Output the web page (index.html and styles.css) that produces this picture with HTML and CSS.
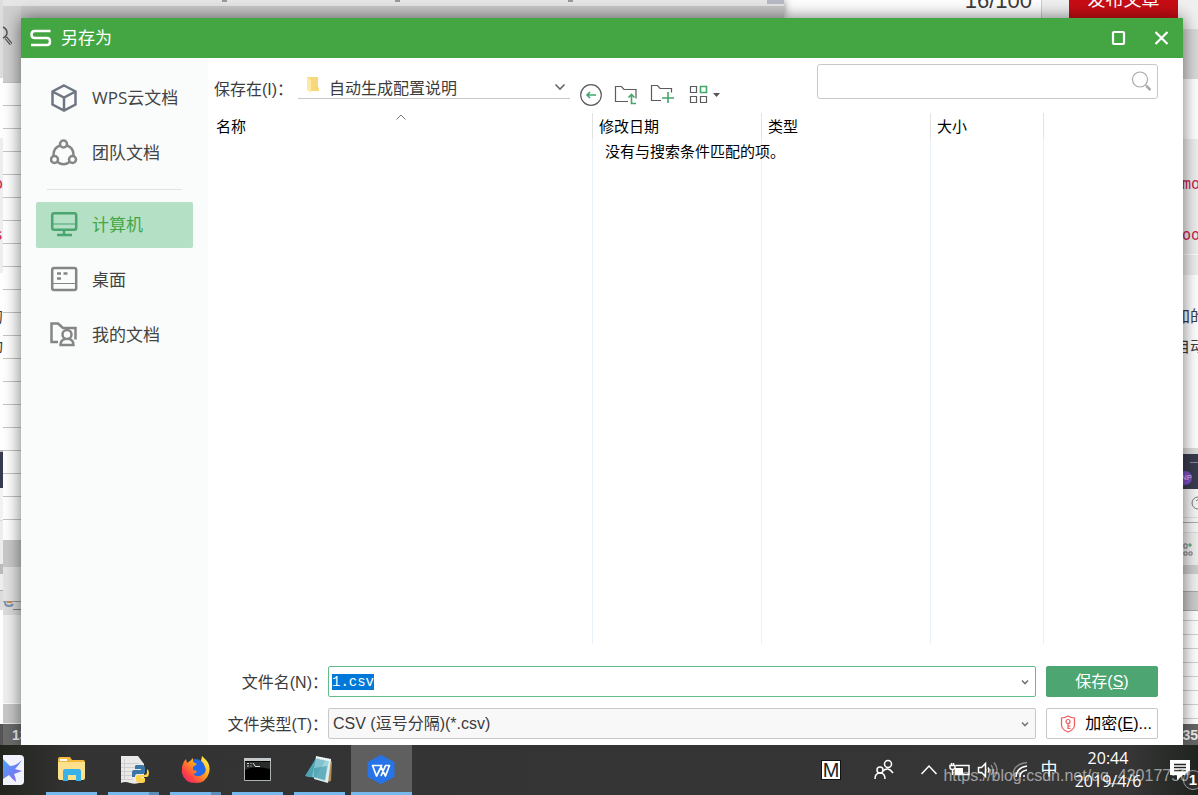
FILE: index.html
```html
<!DOCTYPE html>
<html lang="zh-CN">
<head>
<meta charset="utf-8">
<title>另存为</title>
<link rel="stylesheet" href="styles.css">
</head>
<body>
<main class="desktop">
  <div class="backdrop" aria-hidden="true">
    <div class="back-top">
      <div class="sheet-top"><i></i><i></i><i></i></div>
      <div class="title-count">16/100</div>
      <div class="publish">发布文章</div>
    </div>
    <div class="edge edge-page"></div>
    <div class="edge edge-sheet"></div>
    <div class="edge edge-right"></div>
    <svg class="back-lens" viewBox="0 0 12 22"><path d="M3 2q4 2 4 6 0 3-4 5M6 12l5 7"/><path d="M6 13l5 6" stroke-width="3.500"/><path d="M6 13l5 6" stroke="#ddd" stroke-width="1"/></svg>
    <span class="scrap left code s1">o</span>
    <span class="scrap left code s2">s</span>
    <span class="scrap left s3">的</span>
    <span class="scrap left s4">动</span>
    <span class="scrap sheet-num">13</span>
    <span class="scrap right code s1">mo</span>
    <span class="scrap right code s2">oo</span>
    <span class="scrap right s3">加的</span>
    <span class="scrap right s4">自动</span>
    <span class="scrap avatar">NP</span>
    <svg class="back-mark" viewBox="0 0 18 12"><path stroke="#7a90b0" d="M2 1q0 4 4 4 3 0 4-2"/><path stroke="#d08a50" d="M4 1h5"/><path stroke="#888" stroke-width="1" d="M10 8.500h8"/></svg>
    <svg class="back-tools" viewBox="0 0 15 110"><path stroke="#8a8d9a" d="M7 12.500h8"/><circle cx="15" cy="53" r="6"/><path d="M13 51q2-3 4 0l-2 3"/><path d="M1 94h3v4H1zM6 102h3v3H6zM1 102h3v3H1z"/><path class="plus" d="M5 95h4M7 93v4"/></svg>
    <span class="scrap right-num">35</span>
  </div>

  <section class="dialog" role="dialog" aria-labelledby="dialog-title">
    <header class="titlebar">
      <svg class="logo" viewBox="0 0 22 18"><path d="M20.500 2H5Q1.500 2 1.500 5.500T5 9H17Q20 9 20 12.500T17 16H1"/></svg>
      <h1 id="dialog-title">另存为</h1>
      <button class="win-btn" aria-label="最大化"><svg viewBox="0 0 16 16"><rect x="3" y="2" width="11" height="12" rx="1"/></svg></button>
      <button class="win-btn" aria-label="关闭"><svg viewBox="0 0 16 16"><path d="M2.500 2l12 12M14.500 2l-12 12"/></svg></button>
    </header>

    <div class="body">
      <nav class="sidebar">
        <a class="place" href="#cloud"><svg viewBox="0 0 28 28"><g stroke="#6e7682"><path d="M14 1.500l11.500 6v13L14 26.500 2.500 20.500v-13zM2.500 7.500L14 13.500l11.500-6M14 13.500v13"/></g></svg>WPS云文档</a>
        <a class="place" href="#team"><svg viewBox="0 0 28 28"><circle cx="13.500" cy="5" r="3.500"/><circle cx="4.500" cy="20.500" r="3.500"/><circle cx="22.500" cy="20.500" r="3.500"/><path d="M10 6.500Q3 9 3.500 17M17 6.500Q24 9 23.500 17M7.500 23q6 4.500 12 0"/></svg>团队文档</a>
        <hr>
        <a class="place active" href="#computer" aria-current="true"><svg viewBox="0 0 28 28"><rect x="2.200" y="2.200" width="24" height="16.500" rx="2"/><path d="M14 19v5M7 24h15"/><path class="thin" d="M2 13h24"/></svg>计算机</a>
        <a class="place" href="#desk"><svg viewBox="0 0 28 28"><rect x="2.200" y="2" width="24" height="22" rx="2"/><path class="thin" d="M2 17.500h24"/><path d="M7 7.500h4M13.500 7.500h4M7 12.500h4"/></svg>桌面</a>
        <a class="place" href="#docs"><svg viewBox="0 0 28 28"><path d="M8 21H1.500V2.500H8l5 4.500h12.500v11.500"/><circle cx="17" cy="13.500" r="4.500"/><path d="M15 18q-4.500 1-4.500 6h13q0-5-4.500-6"/></svg>我的文档</a>
      </nav>

      <div class="pane">
        <div class="toolbar">
          <label for="folder">保存在(I)：</label>
          <div class="folder-box">
            <svg class="folder-icon" viewBox="0 0 14 18"><path fill="#f9d87c" d="M1 1h11v10l1 1v3H5V5L1 2z"/><path fill="#fdeaa9" d="M1 1l4 3v13l-4-3z"/></svg>
            <select id="folder"><option>自动生成配置说明</option></select>
            <svg class="chev" viewBox="0 0 12 8"><path d="M1.500 1.500L6 6l4.500-4.500"/></svg>
          </div>
          <div class="tools">
            <button aria-label="后退"><svg viewBox="0 0 24 24"><circle cx="12" cy="12" r="10.300"/><path class="g" d="M8 12h9M11 9l-3 3 3 3"/></svg></button>
            <button aria-label="上一级"><svg viewBox="0 0 24 24"><path d="M14 18.500H1.500v-15h6l2.500 3h12v9"/><path class="g" d="M22 20.500h-4.500v-9M14.500 14.500l3-3 3 3"/></svg></button>
            <button aria-label="新建文件夹"><svg viewBox="0 0 24 24"><path d="M12 17.500H2.500v-15h6l2.500 3h11.500v4"/><path class="g" d="M13 15h12M19 9v11"/></svg></button>
            <button class="views" aria-label="视图"><svg viewBox="0 0 34 24"><path d="M3.500 3.500h6v6h-6zM3.500 13.500h6v6h-6zM13.500 13.500h6v6h-6z"/><path class="g" d="M13.500 3.500h6v6h-6z"/><path class="f" d="M26 10h7l-3.500 4z"/></svg></button>
          </div>
          <div class="search">
            <input type="search" aria-label="搜索">
            <svg viewBox="0 0 20 20"><circle cx="9" cy="8.500" r="7.500"/><path d="M14.500 14l1.500 1.500"/><path stroke-width="2.600" d="M15.500 15l4 4"/></svg>
          </div>
        </div>

        <table class="files">
          <colgroup><col><col class="c-date"><col class="c-date"><col class="c-size"><col class="c-rest"></colgroup>
          <thead><tr><th>名称<svg class="sort" viewBox="0 0 12 6"><path d="M1.500 5.500L6 1l4.500 4.500"/></svg></th><th>修改日期</th><th>类型</th><th>大小</th><th></th></tr></thead>
          <tbody><tr><td></td><td class="empty">没有与搜索条件匹配的项。</td><td></td><td></td><td></td></tr></tbody>
        </table>

        <form class="form">
          <label for="fname">文件名(N)：</label>
          <div class="combo focus"><input id="fname" type="text" value="1.csv" autofocus><svg class="mini" viewBox="0 0 8 6"><path d="M1 1.500l3 3 3-3"/></svg></div>
          <button class="btn primary" type="button"><span>保存(<u>S</u>)</span></button>
          <label for="ftype">文件类型(T)：</label>
          <div class="combo"><select id="ftype"><option>CSV (逗号分隔)(*.csv)</option></select><svg class="mini" viewBox="0 0 8 6"><path d="M1 1.500l3 3 3-3"/></svg></div>
          <button class="btn encrypt" type="button"><svg viewBox="0 0 16 18"><path d="M8 1q3 2 6.500 2v7q0 4.500-6.500 7Q1.500 14.500 1.500 10V3Q5 3 8 1z"/><circle cx="8" cy="6.500" r="2"/><path d="M8 8.500V14M8 11h2.500M8 13.500h2.500"/></svg><span>加密(<u>E</u>)...</span></button>
        </form>
      </div>
    </div>
  </section>
</main>

<footer class="taskbar">
  <div class="cut-app"><svg viewBox="0 0 21 30"><defs><linearGradient id="bird" x1="0" y1="0" x2="1" y2="1"><stop offset="0" stop-color="#4aa6f8"/><stop offset=".6" stop-color="#727cf4"/><stop offset="1" stop-color="#b06ae8"/></linearGradient></defs><path fill="#f1f3fc" d="M0 0h17q4 0 4 4v22q0 4-4 4H0z"/><path fill="url(#bird)" d="M0 4l7 7q6 0 12-6-3 5-7 9l7 2-8 3q2 4 2 8-4-3-7-7l-6 4z"/></svg></div>
  <button class="task" aria-label="文件资源管理器"><svg viewBox="0 0 30 30"><path fill="#f5b93c" d="M1 4q0-2 2-2h10l2 3h11q2 0 2 2v16H1z"/><path fill="#fde08c" d="M1 7h27v16q0 2-2 2H3q-2 0-2-2z"/><path fill="#fff" d="M3 4h7v2H3z"/><path fill="#38b2e8" d="M6 26V16q0-2 2-2h14q2 0 2 2v10h-5v-6h-8v6z"/></svg></button>
  <button class="task group" aria-label="Python"><svg viewBox="0 0 30 30"><path fill="#e9e9e7" d="M2 1h17l6 8v17q-7 4-14 2-5-2-9 0z"/><path stroke="#cfcfcd" fill="none" d="M5.500 4v21M2 8.500h18M2 12.500h17M2 16.500h13M2 20.500h12M2 24.500h12"/><path fill="#3a76a8" d="M17 10h6q3 0 3 3v4q0 2-2 2h-6q-2 0-2 3h-3v-5q0-2 2-2h7v-1h-6v-3z"/><path fill="#ffd34b" d="M28 14q2 1 2 4t-2 4h-6v1h4v3q0 2-4 2-5 0-5-3v-3q0-2 2-2h6q3 0 3-3z"/></svg></button>
  <button class="task group" aria-label="Firefox"><svg viewBox="0 0 30 30"><defs><linearGradient id="fox" x1="1" y1="0" x2="0" y2="1"><stop offset=".1" stop-color="#fff34a"/><stop offset=".45" stop-color="#ff9a1e"/><stop offset=".75" stop-color="#ff3e48"/><stop offset="1" stop-color="#d8208a"/></linearGradient></defs><circle cx="14.500" cy="14" r="10" fill="#2268e8"/><path fill="url(#fox)" d="M5 4l1 4 3-2 3-3v4l4 2-4 3v3l4 1q-1 3-4 3 4 4 9 1t3-8q-1-4-4-6l1-5q2 2 4 4 5 5 3 13-3 10-13 10Q3 28 1 18 0 9 5 4z"/></svg></button>
  <button class="task" aria-label="命令提示符"><svg viewBox="0 0 30 30"><path fill="#000" stroke="#aeb3b6" d="M1.500 4.500h26v21h-26z"/><path fill="#c4c8ca" d="M1 3h27v3H1z"/><path fill="#555" d="M2 7h25v7Q12 10 2 15z" opacity=".5"/><path stroke="#ddd" fill="none" d="M4 8.500h2M4 11h2M8 8v1M8 10.500v1M10 8l2 3M12 11.500h5"/></svg></button>
  <button class="task" aria-label="记事本"><svg viewBox="0 0 30 30"><path fill="#b48b54" d="M25 5l2 2-1 19-4 1z"/><path fill="#dfeff1" d="M11 1l15 3-3 24-14-4z"/><path fill="#4da3b4" d="M11 3L0 21q5 2 11 1l9-16z"/><path fill="#8fcbd5" d="M11 3l13 3-4 20-13-4z" opacity=".8"/><path fill="#3e98aa" d="M9 13l13-2-2 14-11-3z" opacity=".6"/><path stroke="#fff" stroke-dasharray="1 1" fill="none" stroke-width="2" d="M11 2.500l15 3"/></svg></button>
  <button class="task current" aria-label="WPS"><svg viewBox="0 0 30 30"><path fill="#2674e8" stroke="#2674e8" stroke-width="3" stroke-linejoin="round" d="M14 1.500l12 6.500v13l-12 6.500L2 21V8z"/><path fill="none" stroke="#fff" stroke-width="1.700" stroke-linejoin="round" d="M15.500 10.500H5.500L9.500 21l4.500-9 4.500 9 4-10.500h-4L14 21"/></svg></button>

  <div class="tray">
    <span class="ime">M</span>
    <svg width="22" height="22" viewBox="0 0 22 22"><circle cx="7" cy="11" r="3"/><circle cx="15" cy="5" r="3.500"/><path d="M2 20q0-6 5-6t5 6M10 12q5-5 10 2"/></svg>
    <svg width="18" height="12" viewBox="0 0 18 12"><path d="M1.500 10L9 2l7.500 8"/></svg>
    <svg width="22" height="16" viewBox="0 0 22 16"><path d="M7 3.500h13v9H6M1 3.500h5v2q0 2-2.500 2T1 5.500zM2.500 1v2M4.500 1v2M3.500 8v5"/><path class="solid" d="M6 6h8v6H6z"/></svg>
    <svg width="22" height="18" viewBox="0 0 22 18"><path d="M1.500 6.500h3l4-4v13l-4-4h-3zM11 6.500q2 2.500 0 5"/><path class="dim" d="M14 4q4 5 0 10M17 1.500q6 7.500 0 15"/></svg>
    <svg width="18" height="18" viewBox="0 0 18 18"><path class="dim" d="M2 15Q2 3 16 1.500"/><path d="M5 16Q5 7 16 5M9 16q0-6 7-7"/><circle class="solid" cx="13" cy="15" r="1"/></svg>
    <span class="cn">中</span>
    <time class="clock"><span>20:44</span><span>2019/4/6</span></time>
    <div class="notify"><svg width="24" height="22" viewBox="0 0 24 22"><path fill="#fff" stroke="none" d="M2 1h20v15h-7l-6 5v-5H2z"/><path stroke="#222" d="M6 5.500h12M6 8.500h12M6 11.500h12"/></svg><b>1</b></div>
  </div>
  <div class="watermark">https://blog.csdn.net/qq_43017750</div>
</footer>
<script src="app.js"></script>
</body>
</html>
```

FILE: app.js
```js
const nameField = document.getElementById("fname");
nameField.focus();
nameField.select();
```

FILE: styles.css
```css
* { box-sizing: border-box; }
body {
  margin: 0;
  height: 100vh;
  display: grid;
  grid-template-rows: 1fr 50px;
  overflow: hidden;
  font: 16px/20px "Liberation Sans", "Noto Sans CJK SC", sans-serif;
  color: #3c3c3c;
}
svg { fill: none; flex: none; }
button, input, select { font: inherit; color: inherit; margin: 0; border: 0; padding: 0; background: none; }
input, select { appearance: none; outline: 0; width: 100%; height: 100%; }

/* windows lying behind the dialog */
.desktop { position: relative; overflow: hidden; background: #fff; }
.backdrop, .edge { position: absolute; inset: 0; }
.back-top { height: 18px; display: flex; background: linear-gradient(90deg, transparent 1041px, #f0f0f0 1041px); overflow: hidden; }
.sheet-top {
  width: 784px; display: flex; gap: 168px; padding-left: 222px;
  background: linear-gradient(90deg, transparent 767px, #b7bac6 767px) 0 0 / 100% 4px no-repeat, linear-gradient(#e6e6e6 6px, #c8c8c8 6px);
  box-shadow: 0 0 8px #888;
}
.sheet-top i { width: 5px; height: 2px; background: #999; }
.title-count { width: 258px; padding-right: 9px; text-align: right; font-size: 22px; line-height: 1px; border-right: 1px solid #ccc; }
.publish { margin-left: 27px; width: 109px; background: #c90c14; color: #fff; font-size: 18px; line-height: 1px; text-align: center; }
.edge-page {
  right: auto; width: 3px;
  background: linear-gradient(#ddd 78px, #fff 78px 138px, #eee 138px 273px, #fff 273px 450px, #bbb 450px 452px, #393c50 452px 488px, #f3f3f3 488px 520px, #ddd 520px 521px, #eee 521px 564px, #bbb 564px 574px, #eee 574px 590px, #aaa 590px 591px, #ddd 591px 610px, #fff 610px 724px, #555 724px);
}
.edge-sheet {
  left: 3px; right: auto; width: 18px;
  background:
    linear-gradient(#e6e6e6 6px, #d0d0d0 6px 82px, transparent 82px 540px, #c9c9c9 540px 567px, #e4e4e4 567px 601px, #999 601px 602px, #dcdcdc 602px 615px, #f0f0f0 615px 703px, #fff 703px 704px, #c8c8c8 704px 723px, #eee 723px 724px, #6b6b6b 724px),
    repeating-linear-gradient(#fff 0 13px, #c4c4c4 13px 14px, #fff 14px 23px);
}
.edge-right {
  left: auto; width: 15px;
  background:
    linear-gradient(#f0f0f0 29px, #d9d9d9 29px 79px, #fff 79px 139px, #eee 139px 254px, #fff 254px 255px, #eee 255px 275px, #fff 275px 448px, #ddd 448px 454px, #393c50 454px 489px, #f5f5f5 489px 517px, #ddd 517px 518px, #f5f5f5 518px 522px, #aaa 522px 523px, #f5f5f5 523px 532px, #ddd 532px 533px, #eee 533px 565px, #ccc 565px 574px, #f0f0f0 574px 591px, #aaa 591px 592px, #ccc 592px 610px, #aaa 610px 611px, transparent 611px 724px, #666 724px),
    repeating-linear-gradient(#fff 0 4px, #d0d0d0 4px 5px, #fff 5px 14px);
}
.back-lens { position: absolute; left: 0; top: 25px; width: 12px; height: 22px; stroke: #555; stroke-width: 1.500; }
.back-mark { position: absolute; left: 3px; top: 601px; width: 18px; height: 12px; stroke-width: 2; }
.scrap { position: absolute; white-space: nowrap; overflow: hidden; height: 20px; }
.scrap.left { left: 0; width: 3px; direction: rtl; }
.scrap.right { right: 0; width: 16px; }
.scrap.code { color: #c7254e; font-family: "DejaVu Sans Mono", monospace; font-size: 15px; }
.s1 { top: 174px; } .s2 { top: 225px; } .s3 { top: 307px; } .s4 { top: 337px; }
.scrap.right.s3, .scrap.right.s4 { display: flex; justify-content: center; }
.sheet-num, .right-num { top: 725px; color: #eee; font-weight: bold; font-size: 14px; }
.sheet-num { left: 12px; }
.right-num { right: 0; }
.avatar { right: 6px; top: 471px; width: 14px; height: 14px; border-radius: 50%; background: #7b4fc4; color: #d8c8f0; font-size: 8px; line-height: 14px; text-align: right; }
.back-tools { position: absolute; right: 0; top: 450px; width: 15px; height: 110px; stroke: #777; }
.back-tools .plus { stroke: #3ca464; }

/* dialog */
.dialog {
  position: absolute; inset: 18px 15px 0 21px;
  display: flex; flex-direction: column;
  background: #fff; box-shadow: 0 0 16px rgba(0, 0, 0, .55);
}
.titlebar { height: 40px; display: flex; align-items: center; padding: 0 8px 0 9px; background: #43a643; color: #fff; }
.logo { width: 22px; height: 18px; stroke: #fff; stroke-width: 2.500; }
.titlebar h1 { margin: 0 auto 0 9px; font-size: 17px; line-height: 24px; font-weight: normal; padding-top: 2px; }
.win-btn { width: 28px; height: 28px; margin-left: 15px; display: grid; place-items: center; }
.win-btn svg { width: 16px; height: 16px; stroke: #fff; stroke-width: 2.200; transform: none; }
.body { flex: 1; display: flex; min-height: 0; }
.sidebar { width: 187px; flex: none; padding: 17px 15px 0; background: #fafcfb; }
.place {
  display: flex; align-items: center; gap: 14px; height: 46px; margin-bottom: 9px; padding-left: 14px;
  color: #444; font: 17px/24px "Open Sans", "Noto Sans CJK SC", sans-serif; text-decoration: none; border-radius: 2px;
}
.place svg { width: 28px; height: 28px; stroke: #858585; stroke-width: 2.500; }
.place .thin { stroke-width: 1; }
.place.active { background: #b4e0c6; color: #43a643; }
.place.active svg { stroke: #4aa56f; }
.sidebar hr { height: 1px; margin: 13px 11px 12px; border: 0; background: #e2e4e4; }

.pane { flex: 1; min-width: 0; display: flex; flex-direction: column; padding: 6px 25px 6px 0; }
.toolbar { display: flex; height: 49px; padding-left: 6px; }
.toolbar label { width: 84px; line-height: 52px; white-space: nowrap; flex: none; }
.folder-box { position: relative; width: 272px; height: 35px; border-bottom: 1px solid #c8c8c8; }
.folder-box select { padding: 15px 24px 0 31px; line-height: 20px; }
.folder-icon { position: absolute; left: 8px; top: 12px; width: 14px; height: 18px; }
.chev { position: absolute; right: 4px; top: 19px; width: 12px; height: 8px; stroke: #666; stroke-width: 1.600; }
.tools { display: flex; gap: 11px; padding: 19px 0 0 9px; }
.tools button { width: 24px; height: 24px; }
.tools .views { width: 34px; margin-left: 3px; }
.tools svg { width: 100%; height: 24px; stroke: #5c5c5c; display: block; overflow: visible; stroke-width: 1.200; }
.tools .g { stroke: #43a66b; stroke-width: 1.600; }
.tools .f { fill: #555; stroke: none; }
.search { position: relative; width: 341px; height: 35px; margin-left: auto; border: 1px solid #c8c8c8; border-radius: 3px; }
.search input { padding: 0 32px 0 8px; }
.search svg { position: absolute; right: 6px; top: 6px; width: 20px; height: 20px; stroke: #aaa; stroke-width: 1.200; }

.files { flex: 1; width: 100%; table-layout: fixed; border-spacing: 0; color: #000; font-size: 15px; height: 530px; }
.c-date { width: 169px; }
.c-size { width: 113px; }
.c-rest { width: 115px; }
.files th { position: relative; height: 26px; padding: 2px 0 0 6px; text-align: left; font-weight: normal; border-left: 1px solid #e2e2e2; }
.files td { padding: 3px 0 0 12px; vertical-align: top; border-left: 1px solid #e8f1fa; }
.files th:first-child, .files td:first-child { border-left: 0; }
.files th:first-child { padding-left: 8px; }
.files .empty { white-space: nowrap; }
.sort { position: absolute; left: 187px; top: 1px; width: 12px; height: 6px; stroke: #777; }

.form { display: grid; grid-template-columns: 120px 1fr 112px; grid-auto-rows: 31px; gap: 11px 0; margin-top: 22px; }
.form label { text-align: right; line-height: 34px; white-space: nowrap; }
.combo { position: relative; margin-right: 10px; border: 1px solid #c8c8c8; border-radius: 2px; background: #f8f8f8; }
.combo.focus { border-color: #62bd8b; background: #fff; }
.combo input { padding: 0 20px 0 3px; font: 14px/18px "Liberation Mono", monospace; }
.combo input::selection { background: #0078d7; color: #fff; }
.combo select { padding: 0 20px 0 4px; }
.mini { position: absolute; right: 6px; top: 12px; width: 8px; height: 6px; stroke: #777; stroke-width: 1.600; }
.btn { display: flex; align-items: center; justify-content: center; gap: 9px; border: 1px solid #c8c8c8; border-radius: 2px; background: #fff; color: #000; white-space: nowrap; }
.btn.primary { background: #4da571; border-color: #4da571; color: #fff; }
.btn.encrypt { padding-left: 8px; }
.btn svg { width: 16px; height: 18px; stroke: #f05a5a; stroke-width: 1.200; }

/* taskbar */
.taskbar { position: relative; display: flex; background: linear-gradient(90deg, #22251d, #333 70px, #363636 1130px, #20241f); color: #fff; }
.cut-app { width: 38px; margin-left: 3px; padding-top: 10px; }
.cut-app svg { width: 21px; height: 30px; }
.task { position: relative; width: 62px; display: grid; place-items: center; }
.task svg { width: 30px; height: 30px; }
.task::after { content: ""; position: absolute; left: 5px; right: 6px; bottom: 0; height: 3px; background: #76b9ed; }
.task.group::after { background: linear-gradient(90deg, #76b9ed 41px, #5b8db6 41px); }
.task.current { width: 61px; background: #5f5f5f; }
.task.current::after { left: 0; right: 0; }
.tray { margin-left: auto; display: grid; grid-template-columns: 54px 52px 38px 24px 32px 32px 26px 92px 44px; place-items: center; }
.tray svg { stroke: #fff; stroke-width: 1.500; }
.tray .solid { fill: #fff; stroke: none; }
.tray .dim { stroke: #888; }
.ime { width: 20px; height: 20px; background: #fff; border: 1px solid #111; color: #222; line-height: 18px; font-size: 20px; text-align: center; }
.cn { font-size: 17px; }
.clock { display: grid; font: 16px/23px "Open Sans", sans-serif; text-align: center; }
.notify { position: relative; width: 36px; height: 22px; padding-left: 10px; }
.notify b { position: absolute; right: -9px; top: 11px; width: 20px; height: 20px; border: 1px solid #999; border-radius: 50%; background: rgba(50, 50, 50, .7); font-size: 15px; line-height: 18px; text-align: center; }
.watermark { position: absolute; right: 9px; top: 21px; color: rgba(255, 255, 255, .55); white-space: nowrap; }
```
